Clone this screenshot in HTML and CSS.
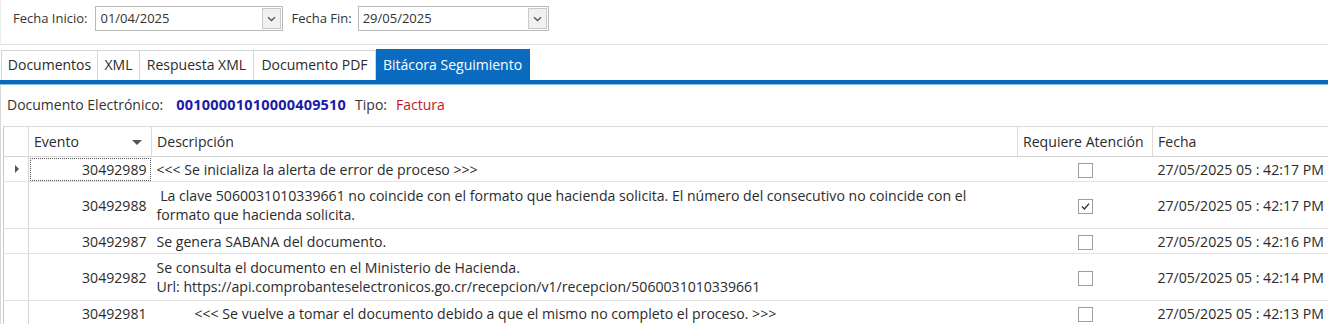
FILE: index.html
```html
<!DOCTYPE html>
<html lang="es">
<head>
<meta charset="utf-8">
<link rel="stylesheet" href="styles.css">
</head>
<body>
<div class="toolbar">
  <span class="lbl">Fecha Inicio:</span>
  <div class="combo c1"><span class="val">01/04/2025</span><span class="btn"><svg width="9" height="6" viewBox="0 0 9 6"><path d="M1 1.2 L4.5 4.5 L8 1.2" fill="none" stroke="#555" stroke-width="1.3"/></svg></span></div>
  <span class="lbl lbl2">Fecha Fin:</span>
  <div class="combo c2"><span class="val">29/05/2025</span><span class="btn"><svg width="9" height="6" viewBox="0 0 9 6"><path d="M1 1.2 L4.5 4.5 L8 1.2" fill="none" stroke="#555" stroke-width="1.3"/></svg></span></div>
</div>
<div class="tabs">
  <div class="tab w1">Documentos</div>
  <div class="tab w2">XML</div>
  <div class="tab w3">Respuesta XML</div>
  <div class="tab w4">Documento PDF</div>
  <div class="tab sel w5">Bitácora Seguimiento</div>
</div>
<div class="tabbar"></div>
<div class="page">
  <div class="docinfo">
    <span>Documento Electrónico:</span>
    <span class="num">00100001010000409510</span>
    <span>Tipo:</span>
    <span class="tipo">Factura</span>
  </div>
  <div class="gridwrap">
    <table class="grid">
      <colgroup>
        <col class="c-rh"><col class="c-ev"><col class="c-desc"><col class="c-req"><col class="c-fecha">
      </colgroup>
      <thead>
        <tr>
          <th class="rh"></th>
          <th class="ev-h">Evento<span class="sort"></span></th>
          <th>Descripción</th>
          <th>Requiere Atención</th>
          <th>Fecha</th>
        </tr>
      </thead>
      <tbody>
        <tr class="r1">
          <td class="rh"><span class="cur"></span></td>
          <td class="ev focus">30492989</td>
          <td>&lt;&lt;&lt; Se inicializa la alerta de error de proceso &gt;&gt;&gt;</td>
          <td class="chk"><span class="box"></span></td>
          <td>27/05/2025 05 : 42:17 PM</td>
        </tr>
        <tr class="r2">
          <td class="rh"></td>
          <td class="ev">30492988</td>
          <td>&nbsp;La clave 5060031010339661 no coincide con el formato que hacienda solicita. El número del consecutivo no coincide con el<br>formato que hacienda solicita.</td>
          <td class="chk"><span class="box"><svg width="11" height="11" viewBox="0 0 11 11"><path d="M2 5.6 L4.4 8 L9 2.6" fill="none" stroke="#333" stroke-width="1.4"/></svg></span></td>
          <td>27/05/2025 05 : 42:17 PM</td>
        </tr>
        <tr class="r1">
          <td class="rh"></td>
          <td class="ev">30492987</td>
          <td>Se genera SABANA del documento.</td>
          <td class="chk"><span class="box"></span></td>
          <td>27/05/2025 05 : 42:16 PM</td>
        </tr>
        <tr class="r2">
          <td class="rh"></td>
          <td class="ev">30492982</td>
          <td>Se consulta el documento en el Ministerio de Hacienda.<br>Url: https://api.comprobanteselectronicos.go.cr/recepcion/v1/recepcion/5060031010339661</td>
          <td class="chk"><span class="box"></span></td>
          <td>27/05/2025 05 : 42:14 PM</td>
        </tr>
        <tr class="r1">
          <td class="rh"></td>
          <td class="ev">30492981</td>
          <td class="indent">&lt;&lt;&lt; Se vuelve a tomar el documento debido a que el mismo no completo el proceso. &gt;&gt;&gt;</td>
          <td class="chk"><span class="box"></span></td>
          <td>27/05/2025 05 : 42:13 PM</td>
        </tr>
      </tbody>
    </table>
  </div>
</div>
</body>
</html>
```
FILE: styles.css
```css
* { box-sizing: border-box; }
html, body { margin: 0; padding: 0; }
body {
  width: 1328px;
  height: 324px;
  overflow: hidden;
  background: #ffffff;
  font-family: "Open Sans", "Noto Sans", sans-serif;
  font-size: 14px;
  color: #2b2b2b;
}
.toolbar {
  height: 45px;
  display: flex;
  align-items: flex-start;
  padding: 6px 0 0 12px;
  border-bottom: 1px solid #e2e2e2;
  border-left: 1px solid #ececec;
  font-size: 13px;
}
.lbl {
  line-height: 25px;
  color: #333;
  margin-right: 8px;
}
.lbl2 { margin-left: 8px; margin-right: 6px; }
.combo {
  display: flex;
  height: 25px;
  border: 1px solid #b9b9b9;
  background: #fff;
}
.c1 { width: 188px; }
.c2 { width: 191px; }
.val {
  flex: 1;
  line-height: 23px;
  padding-left: 4px;
  color: #333;
}
.btn {
  width: 19px;
  margin: 1px;
  border: 1px solid #c9c9c9;
  background: #f1f1f1;
  display: flex;
  align-items: center;
  justify-content: center;
}
.tabs {
  display: flex;
  margin-top: 4px;
  padding-left: 1px;
  height: 31px;
  align-items: flex-end;
}
.tab {
  height: 30px;
  line-height: 28px;
  text-align: center;
  border: 1px solid #d6d6d6;
  border-bottom: none;
  border-left: none;
  background: #fff;
  color: #2b2b2b;
  white-space: nowrap;
}
.tab.w1 { width: 97px; border-left: 1px solid #d6d6d6; }
.tab.w2 { width: 42px; }
.tab.w3 { width: 114px; }
.tab.w4 { width: 122px; }
.tab.w5 { width: 154px; }
.tab.sel {
  height: 31px;
  line-height: 30px;
  background: #0a6bc0;
  border-color: #0a6bc0;
  color: #fff;
}
.tabbar {
  height: 5px;
  background: #0a69bd;
  border-bottom: 1px solid #8fbde6;
}
.page {
  border-left: 1px solid #d8d8d8;
  height: 240px;
}
.docinfo {
  padding: 10px 0 0 6px;
  height: 41px;
  display: flex;
  align-items: baseline;
  color: #333;
}
.docinfo span { margin-right: 9px; }
.docinfo .num {
  color: #1b1ba8;
  font-weight: bold;
  font-size: 14.5px;
  letter-spacing: 0.2px;
  margin-left: 4px;
}
.docinfo .tipo { color: #c4161c; }
.gridwrap {
  padding-left: 2px;
}
.grid {
  border-collapse: collapse;
  table-layout: fixed;
  width: 1420px;
  border-left: 1px solid #c8c8c8;
  border-top: 1px solid #dadada;
  font-size: 14.1px;
}
.c-rh { width: 25px; }
.c-ev { width: 123px; }
.c-desc { width: 866px; }
.c-req { width: 135px; }
.c-fecha { width: 271px; }
.grid th {
  height: 30px;
  font-weight: normal;
  text-align: left;
  padding: 0 5px;
  color: #2b2b2b;
  border-right: 1px solid #dcdcdc;
  border-bottom: 1px solid #d4d4d4;
  white-space: nowrap;
}
.grid th.rh { padding: 0; }
.ev-h { position: relative; }
.sort {
  position: absolute;
  right: 9px;
  top: 13px;
  width: 0; height: 0;
  border-left: 5px solid transparent;
  border-right: 5px solid transparent;
  border-top: 5px solid #555;
}
.grid td {
  padding: 0 5px;
  border-bottom: 1px solid #e2e2e2;
  vertical-align: middle;
  line-height: 19px;
  color: #2b2b2b;
  white-space: nowrap;
}
.grid tr.r1 td { height: 25px; }
.grid tr.r2 td { height: 47px; }
.grid td.rh {
  padding: 0;
  border-right: 1px solid #d4d4d4;
  border-bottom: 1px solid #e2e2e2;
  position: relative;
}
.cur {
  position: absolute;
  left: 11px;
  top: 8px;
  width: 0; height: 0;
  border-top: 4px solid transparent;
  border-bottom: 4px solid transparent;
  border-left: 4px solid #555;
}
.grid td.ev { text-align: right; }
.grid td.focus { outline: 1px dotted #555; outline-offset: -2px; }
.grid td.indent { padding-left: 43px; }
.grid td.chk { text-align: center; padding: 0; }
.box {
  display: inline-flex;
  align-items: center;
  justify-content: center;
  width: 15px;
  height: 15px;
  border: 1px solid #9e9e9e;
  background: #fff;
  vertical-align: middle;
}
.box svg { display: block; }
```
